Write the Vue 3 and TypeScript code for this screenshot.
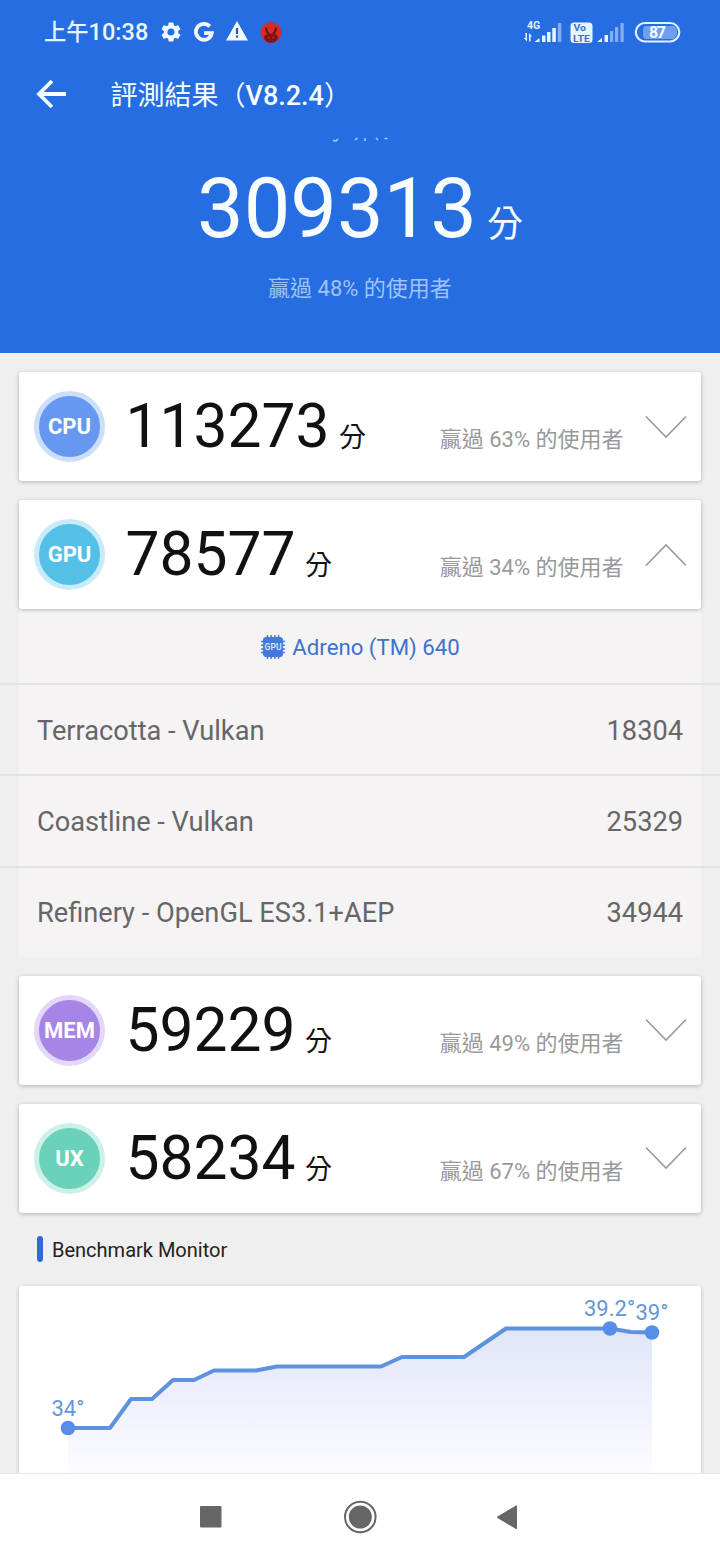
<script setup lang="ts">
import { computed } from 'vue'

interface Score {
  key: string
  score: number
  percent: number
  fill: string
  ring: string
  rows?: { name: string; value: number }[]
}

const scores: Score[] = [
  { key: 'CPU', score: 113273, percent: 63, fill: '#6698f0', ring: '#cddff8' },
  {
    key: 'GPU', score: 78577, percent: 34, fill: '#54c0e8', ring: '#c8ebf7',
    rows: [
      { name: 'Terracotta - Vulkan', value: 18304 },
      { name: 'Coastline - Vulkan', value: 25329 },
      { name: 'Refinery - OpenGL ES3.1+AEP', value: 34944 },
    ],
  },
  { key: 'MEM', score: 59229, percent: 49, fill: '#a685e7', ring: '#e2d8f7' },
  { key: 'UX', score: 58234, percent: 67, fill: '#6ad1bb', ring: '#cdf0e8' },
]

// Temperature samples in chart-card coordinates.
const points: [number, number][] = [
  [49, 142], [91, 142], [112, 113], [133, 113], [154, 94], [175, 94], [195, 84.5], [237, 84.5],
  [258, 80.5], [362, 80.5], [383, 71], [445, 71], [487, 42.5], [591, 42.5], [612, 46], [633, 46.5],
]
const line = computed(() => points.map((p) => p.join(',')).join(' '))
const area = computed(() => `49,188 ${line.value} 633,188`)
const pins = [
  { x: 49, y: 142, label: '34°', tx: 32.5, ty: 129.5 },
  { x: 591, y: 42.5, label: '39.2°', tx: 565, ty: 29.5 },
  { x: 633, y: 46.5, label: '39°', tx: 616.5, ty: 33.5 },
]
</script>

<template>
  <div class="screen">
    <header class="hero">
      <div class="status">
        <span class="clock"><span class="ampm">上午</span>10:38</span>
        <svg class="gear" width="24" height="24" viewBox="0 0 24 24"><path fill="#f2faff" d="M19.14 12.94c.04-.3.06-.61.06-.94 0-.32-.02-.64-.07-.94l2.03-1.58a.49.49 0 0 0 .12-.61l-1.92-3.32a.488.488 0 0 0-.59-.22l-2.39.96c-.5-.38-1.03-.7-1.62-.94l-.36-2.54a.484.484 0 0 0-.48-.41h-3.84c-.24 0-.43.17-.47.41l-.36 2.54c-.59.24-1.13.57-1.62.94l-2.39-.96c-.22-.08-.47 0-.59.22L2.74 8.87c-.12.21-.08.47.12.61l2.03 1.58c-.05.3-.09.63-.09.94s.02.64.07.94l-2.03 1.58a.49.49 0 0 0-.12.61l1.92 3.32c.12.22.37.29.59.22l2.39-.96c.5.38 1.03.7 1.62.94l.36 2.54c.05.24.24.41.48.41h3.84c.24 0 .44-.17.47-.41l.36-2.54c.59-.24 1.13-.56 1.62-.94l2.39.96c.22.08.47 0 .59-.22l1.92-3.32c.12-.22.07-.47-.12-.61l-2.01-1.58zM12 15.6A3.61 3.61 0 0 1 8.400 12c0-1.980 1.620-3.600 3.600-3.600s3.600 1.620 3.600 3.600-1.620 3.600-3.600 3.600z"/></svg>
        <svg class="goog" width="20" height="22" viewBox="0 0 20 22"><path d="M15.800 5.400A8 8 0 1 0 17.800 12.200H10" fill="none" stroke="#f2faff" stroke-width="3.800"/></svg>
        <svg class="warn" width="24" height="24" viewBox="0 0 24 24"><path fill="#f2faff" d="M1 21.500h22L12 2 1 21.500z"/><path d="M12 9v6M12 16.500v2.200" stroke="#32589a" stroke-width="2.200"/></svg>
        <svg class="bench" width="22" height="24" viewBox="0 0 22 24">
          <path fill="#d52d25" d="M1 14C0 9 2 5 4 4l.5 2L7 2l.8 2L11 .5 14 4l1.200-2L17.500 6l.8-1.500C21 7 22 11 21 15c-1 5-5 8-10 8S2 20 1 14z"/>
          <path fill="#7b1517" d="M3.500 17c1.500-2.500 4-3.500 7.500-3.500s6 1 7.500 3.500c-1.500 4-4 5.800-7.500 5.800S5 21 3.500 17z"/>
          <path d="M6 7.500c0 4 1 5 3 6.500M16 7.500c0 4-1 5-3 6.500" stroke="#641416" stroke-width="2" fill="none"/>
          <path d="M8 17.500h1.500M12.500 17.500H14" stroke="#d52d25" stroke-width="1.500"/>
        </svg>
        <svg class="system" width="160" height="26" viewBox="522 18 160 26">
          <g fill="#e8f4ff">
            <text x="527" y="28" class="tiny">4G</text>
            <path d="M525.500 32h1.500v8.500l-3.200-3.500h1.700zM529 40.500h1.500v-5h1.700L529 32z"/>
            <path d="M534.500 41l5-4v4zM542 34.500h3.500V41H542zM547 31h3.500v10H547zM552.300 27h3.500v14h-3.500z"/>
            <path d="M597 41l5-4v4zM604.500 34h3.500v7h-3.500z"/>
            <rect x="570.500" y="21.500" width="22" height="20.500" rx="3.500"/>
          </g>
          <path fill="#83aff1" d="M557.800 22h3.500v19h-3.500zM610 30h3.200v11H610zM615 26h3.200v15H615zM620.500 22h3.200v19h-3.200z"/>
          <text x="573.500" y="29.800" class="volte" textLength="12.500" lengthAdjust="spacingAndGlyphs">Vo</text>
          <text x="573" y="40.600" class="volte" textLength="17" lengthAdjust="spacingAndGlyphs">LTE</text>
          <rect x="635.800" y="22" width="43.500" height="18.500" rx="9.250" fill="none" stroke="#e2f2ff" stroke-width="2.200"/>
          <path d="M646 25h28q3 2 3 6t-3 7h-28q-3 0-3-4v-5q0-4 3-4z" fill="#6f9fee"/>
          <text x="649" y="37" class="battery" textLength="17">87</text>
        </svg>
      </div>

      <div class="bar">
        <svg width="30" height="30" viewBox="0 0 30 30"><path d="M30 15H3M16 2L3 15l13 13" fill="none" stroke="#f6fcff" stroke-width="3.800"/></svg>
        <h1>評測結果（<b>V8.2.4</b>）</h1>
      </div>

      <svg class="cutoff" width="60" height="6" viewBox="0 0 60 6"><path d="M3 3.500l3 .5 2-2M25 3l2.500-2M35 1v3M46 1l2 2M54.500 1.500h3" fill="none" stroke="#a9cbf8" stroke-width="1.600"/></svg>

      <div class="total"><span>309313</span><i>分</i></div>
      <p>贏過 48% 的使用者</p>
    </header>

    <main>
      <section v-for="s in scores" :key="s.key" class="block">
        <div class="card">
          <div class="badge" :style="{ background: s.fill, borderColor: s.ring }">{{ s.key }}</div>
          <div class="figures">
            <span class="num">{{ s.score }}</span><span class="unit">分</span>
            <span class="beat">贏過 {{ s.percent }}% 的使用者</span>
          </div>
          <svg class="chev" width="42" height="24" viewBox="0 0 42 24"><path :d="s.rows ? 'M1 22.500L21 2l20 20.500' : 'M1 1.500L21 22 41 1.500'" fill="none" stroke="#999" stroke-width="1.600"/></svg>
        </div>
        <div v-if="s.rows" class="details">
          <div class="device">
            <svg width="26" height="26" viewBox="0 0 26 26">
              <path d="M7.500 1v24M11.200 1v24M14.900 1v24M18.600 1v24M1 7.500h24M1 11.200h24M1 14.900h24M1 18.600h24" stroke="#4679dc" stroke-width="1.500"/>
              <rect x="3" y="3" width="20" height="20" rx="3" fill="#4679dc"/>
              <text x="4.500" y="15.800" textLength="17" class="chip">GPU</text>
            </svg>
            <span>Adreno (TM) 640</span>
          </div>
          <div v-for="r in s.rows" :key="r.name" class="row"><span>{{ r.name }}</span><span>{{ r.value }}</span></div>
        </div>
      </section>

      <h2><span>Benchmark Monitor</span></h2>

      <div class="chart">
        <svg width="682" height="188" viewBox="0 0 682 188">
          <defs>
            <linearGradient id="heat" gradientUnits="userSpaceOnUse" x1="0" y1="42" x2="0" y2="188">
              <stop offset="0" stop-color="#dfe6f7"/><stop offset=".4" stop-color="#ebeefb"/><stop offset="1" stop-color="#fdfdff"/>
            </linearGradient>
          </defs>
          <polygon :points="area" fill="url(#heat)"/>
          <polyline :points="line" fill="none" stroke="#5f92dd" stroke-width="4" stroke-linejoin="round"/>
          <g v-for="p in pins" :key="p.label">
            <circle :cx="p.x" :cy="p.y" r="7.300" fill="#558ee8"/>
            <text :x="p.tx" :y="p.ty" class="temp">{{ p.label }}</text>
          </g>
        </svg>
      </div>
    </main>

    <nav>
      <svg width="720" height="86" viewBox="0 0 720 86" fill="#666">
        <rect x="200" y="32" width="21.500" height="21.500" rx="1"/>
        <circle cx="360.300" cy="43" r="15.300" fill="none" stroke="#666" stroke-width="2"/>
        <circle cx="360.300" cy="43" r="11.500"/>
        <path d="M517 32v22.500q0 1-1 .5l-18.500-11q-1-.7 0-1.400L516 31.500q1-.5 1 .5z"/>
      </svg>
    </nav>
  </div>
</template>

<style>
body { margin: 0; }
</style>

<style scoped>
.screen { width: 720px; height: 1560px; overflow: hidden; display: flex; flex-direction: column; background: #efefef; font-family: Roboto, "Noto Sans CJK TC", sans-serif; }
.hero { height: 353px; flex: none; background: #256de1; color: #f7fdff; display: flex; flex-direction: column; overflow: hidden; }
.status { height: 64px; flex: none; display: flex; align-items: center; padding-left: 44px; }
.clock { font-size: 23.5px; font-weight: 500; line-height: 30px; width: 115px; white-space: nowrap; color: #e8f5ff; }
.ampm { font-size: 22.3px; }
.gear { margin-right: 11px; }
.goog { margin-right: 11px; }
.warn { margin-right: 11px; margin-bottom: 2px; }
.bench { margin-right: 240px; }
.tiny { font-size: 10.5px; font-weight: 700; }
.volte { font-size: 9px; font-weight: 700; fill: #3b73cf; }
.battery { font-size: 16px; font-weight: 700; fill: #f4fbff; }
.bar { height: 60px; flex: none; display: flex; align-items: center; padding-left: 36px; }
h1 { margin: 4px 0 0 44.500px; font-size: 27px; line-height: 40px; font-weight: 400; white-space: nowrap; }
h1 b { font-weight: 500; }
.cutoff { margin: 13px 0 0 330px; flex: none; }
.total { display: flex; align-items: baseline; margin: 16px 0 0 197px; height: 100px; line-height: 100px; font-size: 83px; }
.total i { font-style: normal; font-size: 36px; margin-left: 10px; }
.hero p { margin: 14px 0 0; text-align: center; font-size: 22px; line-height: 32px; color: #a0c3f6; }
main { flex: 1; overflow: hidden; padding-top: 19px; }
.block { margin-bottom: 19px; }
.card { position: relative; margin: 0 19px; height: 109px; box-sizing: border-box; padding: 0 15px; background: #fff; border-radius: 3px; box-shadow: 0 1px 4px rgba(0, 0, 0, .26); display: flex; align-items: center; }
.badge { width: 61px; height: 61px; border: 5px solid; border-radius: 50%; color: #fff; font-size: 22px; font-weight: 700; line-height: 61px; display: flex; justify-content: center; }
.figures { flex: 1; display: flex; align-items: baseline; margin-left: 20.500px; padding-top: 14px; line-height: 70px; color: #111; }
.num { font-size: 60.500px; }
.unit { font-size: 27px; margin-left: 9.500px; }
.beat { margin-left: auto; margin-right: 21.500px; font-size: 22px; color: #999; white-space: nowrap; }
.chev { flex: none; margin-right: -1px; }
.details { background: linear-gradient(#f5f3f4, #f5f3f4) center / 682px 100% no-repeat; }
.device { height: 74px; box-sizing: border-box; padding-top: 1px; display: flex; align-items: center; justify-content: center; gap: 6px; font-size: 22.200px; color: #3e72cc; }
.chip { font-size: 8.500px; font-weight: 500; fill: #dfe9ff; }
.row { height: 91.300px; box-sizing: border-box; border-top: 2px solid #e4e3e4; padding: 2px 37px 0; display: flex; align-items: center; justify-content: space-between; font-size: 27.2px; color: #666; }
h2 { margin: 23px 0 24px 37px; height: 26px; display: flex; align-items: center; gap: 9px; font-size: 20px; line-height: 26px; font-weight: 400; color: #222; }
h2 span { padding-top: 2px; }
h2::before { content: ""; width: 6px; height: 26px; border-radius: 3px; background: #2f6bd3; }
.chart { margin: 0 19px; height: 240px; background: #fff; border-radius: 3px; box-shadow: 0 1px 4px rgba(0, 0, 0, .2); }
.chart svg { display: block; }
.temp { font-size: 22px; fill: #6495d6; }
nav { height: 87px; flex: none; box-sizing: border-box; border-top: 1px solid #e9e9e9; background: #fff; }
nav svg { display: block; }
</style>
